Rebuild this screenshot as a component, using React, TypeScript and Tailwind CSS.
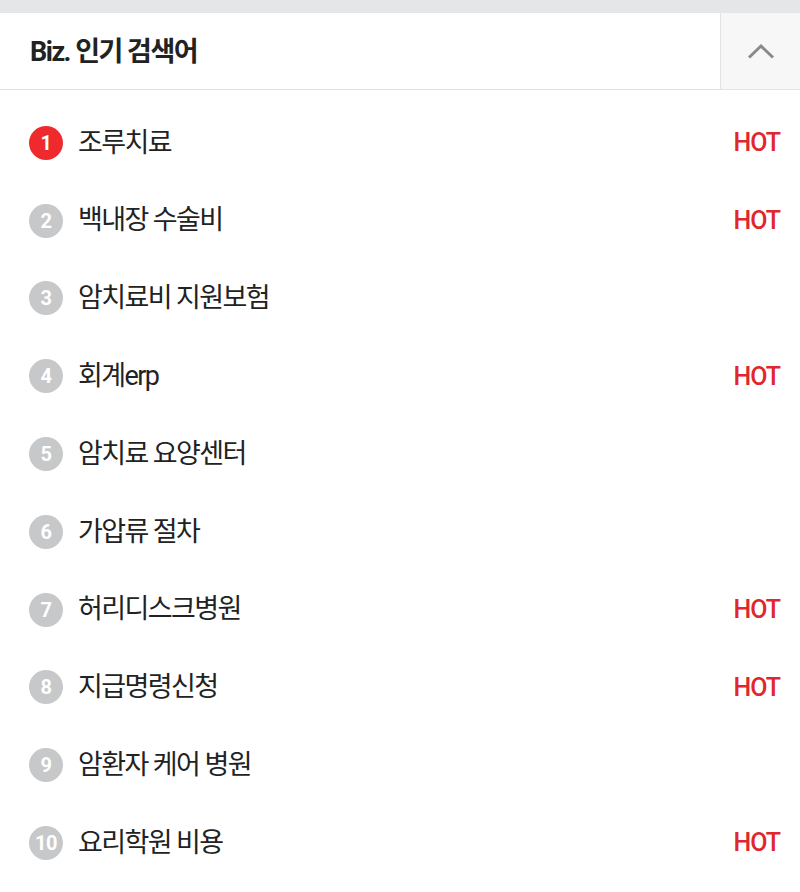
import React from "react";

const items: { label: string; hot: boolean }[] = [
  { label: "조루치료", hot: true },
  { label: "백내장 수술비", hot: true },
  { label: "암치료비 지원보험", hot: false },
  { label: "회계erp", hot: true },
  { label: "암치료 요양센터", hot: false },
  { label: "가압류 절차", hot: false },
  { label: "허리디스크병원", hot: true },
  { label: "지급명령신청", hot: true },
  { label: "암환자 케어 병원", hot: false },
  { label: "요리학원 비용", hot: true },
];

const font = { fontFamily: 'Roboto, "Noto Sans CJK KR", sans-serif' };

export default function App() {
  return (
    <div className="w-[800px] h-[892px] bg-white overflow-hidden" style={font}>
      <div className="h-[13px] bg-[#e5e6e8]" />
      <div className="flex h-[77px] border-b border-[#e3e3e3]">
        <div className="flex-1 flex items-center pl-[30px] pt-[3px]">
          <span className="text-[27px] font-bold tracking-[-1.5px] text-[#222]">Biz. 인기 검색어</span>
        </div>
        <button className="w-[80px] flex items-center justify-center bg-[#f7f7f7] border-l border-[#e3e3e3]">
          <svg width="28" height="16" viewBox="0 0 28 16" fill="none">
            <path d="M2 14.5 L14 3 L26 14.5" stroke="#8a8a8a" strokeWidth="3" />
          </svg>
        </button>
      </div>
      <ul className="pt-[14px] pb-[10px]">
        {items.map((it, i) => (
          <li key={i} className="h-[77.8px] flex items-center pl-[29px] pr-[20px]">
            <span
              className={
                "w-[34px] h-[34px] rounded-full flex items-center justify-center text-white text-[20px] font-bold shrink-0 tracking-[-0.5px] " +
                (i === 0 ? "bg-[#ee2a2e]" : "bg-[#c7c8ca]")
              }
            >
              {i + 1}
            </span>
            <span className="ml-[15px] flex-1 text-[27px] text-[#222] tracking-[-1.6px]">{it.label}</span>
            {it.hot && (
              <span className="text-[25px] font-medium text-[#e0272d] tracking-[-1px]">HOT</span>
            )}
          </li>
        ))}
      </ul>
    </div>
  );
}
